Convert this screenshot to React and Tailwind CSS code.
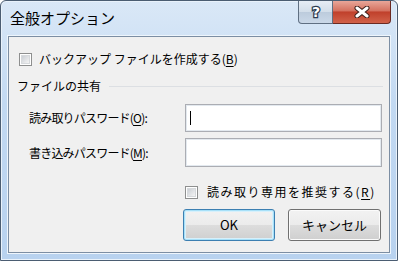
import React from "react";

const font = { fontFamily: '"Noto Sans CJK JP", "Noto Sans", sans-serif' };

const Check = () => (
  <span className="flex h-[13px] w-[13px] shrink-0 items-center justify-center border border-[#8e8f8f] bg-white">
    <span className="h-[9px] w-[9px] border border-[#d6d9dc] bg-[linear-gradient(135deg,#cbcfd5,#f4f4f4)]" />
  </span>
);

const U = ({ children }) => <span className="underline underline-offset-2">{children}</span>;

const Btn = ({ children, primary }) => (
  <button
    className={`h-[32px] w-full rounded-[3px] border text-[13px] text-black ${
      primary
        ? "border-[#3c7fb1] shadow-[inset_0_0_0_1px_#a7e0f8,inset_0_0_0_2px_#d7f0fb]"
        : "border-[#707070] shadow-[inset_0_0_0_1px_#fbfbfb]"
    } bg-[linear-gradient(180deg,#f2f2f2_0%,#ebebeb_50%,#dddddd_50%,#cfcfcf_100%)]`}
  >
    {children}
  </button>
);

export default function App() {
  return (
    <div className="h-[262px] w-[400px] bg-white" style={font}>
      <div className="flex h-[261px] w-[398px] flex-col rounded-t-[6px] border border-[#4b5d72] bg-[linear-gradient(180deg,#dae8f7_0%,#c2d9f2_40%,#b8d2ef_100%)] shadow-[inset_0_0_0_1px_#e9f2fb]">
        {/* title bar */}
        <div className="flex h-[35px] items-start">
          <div className="pl-[9px] pt-[6px] text-[15px] leading-[22px] text-black">全般オプション</div>
          <div className="ml-auto mr-[6px] flex">
            <div className="flex h-[23px] w-[35px] items-center justify-center rounded-bl-[4px] border border-t-0 border-[#5f6f82] bg-[linear-gradient(180deg,#e6edf5_0%,#d2dde9_50%,#bccbdc_50%,#cad8e8_100%)]">
              <svg width="14" height="16" viewBox="0 0 14 16">
                <text
                  x="7"
                  y="13"
                  textAnchor="middle"
                  fontSize="14"
                  fontWeight="bold"
                  fontFamily="DejaVu Sans, sans-serif"
                  fill="#ffffff"
                  stroke="#2c3c50"
                  strokeWidth="2.5"
                  paintOrder="stroke"
                >
                  ?
                </text>
              </svg>
            </div>
            <div className="flex h-[23px] w-[58px] items-center justify-center rounded-br-[4px] border border-l-0 border-t-0 border-[#6b2a22] bg-[linear-gradient(180deg,#e8a699_0%,#d4715f_45%,#c0402b_50%,#d1624a_100%)]">
              <svg width="16" height="12" viewBox="0 0 16 12">
                <path d="M3 2 L13 10 M13 2 L3 10" stroke="#3a1d18" strokeWidth="5" strokeLinecap="round" />
                <path d="M3 2 L13 10 M13 2 L3 10" stroke="#ffffff" strokeWidth="3" strokeLinecap="round" />
              </svg>
            </div>
          </div>
        </div>

        {/* client area */}
        <div className="mx-[7px] mb-[7px] flex flex-1 flex-col border border-[#7c8ea3] bg-[#f0f0f0] text-[12px] leading-[16px] text-black shadow-[0_0_0_1px_#eef5fc]">
          <div className="flex items-center gap-[7px] pl-[10px] pt-[14px]">
            <Check />
            <span>
              バックアップ ファイルを作成する(<U>B</U>)
            </span>
          </div>

          <div className="mt-[11px] flex items-center gap-[8px] pl-[8px] pr-[6px]">
            <span>ファイルの共有</span>
            <span className="h-px flex-1 bg-[#dcdfe3]" />
          </div>

          <div className="mt-[10px] flex items-center pl-[20px]">
            <span className="w-[156px] tracking-[-0.8px]">
              読み取りパスワード(<U>O</U>):
            </span>
            <div className="flex h-[28px] w-[197px] items-center border border-[#abadb3] bg-white pl-[4px] shadow-[inset_0_0_0_1px_#e3e9ef]">
              <span className="h-[14px] w-px bg-black" />
            </div>
          </div>

          <div className="mt-[6px] flex items-center pl-[20px]">
            <span className="w-[156px] tracking-[-0.8px]">
              書き込みパスワード(<U>M</U>):
            </span>
            <div className="h-[29px] w-[197px] border border-[#abadb3] bg-white shadow-[inset_0_0_0_1px_#e3e9ef]" />
          </div>

          <div className="mt-[17px] flex items-center gap-[9px] pl-[176px]">
            <Check />
            <span className="tracking-[1.5px]">
              読み取り専用を推奨する(<U>R</U>)
            </span>
          </div>

          <div className="mt-[9px] flex gap-[13px] pl-[174px]">
            <div className="w-[92px]">
              <Btn primary>OK</Btn>
            </div>
            <div className="w-[93px]">
              <Btn>キャンセル</Btn>
            </div>
          </div>
        </div>
      </div>
    </div>
  );
}
